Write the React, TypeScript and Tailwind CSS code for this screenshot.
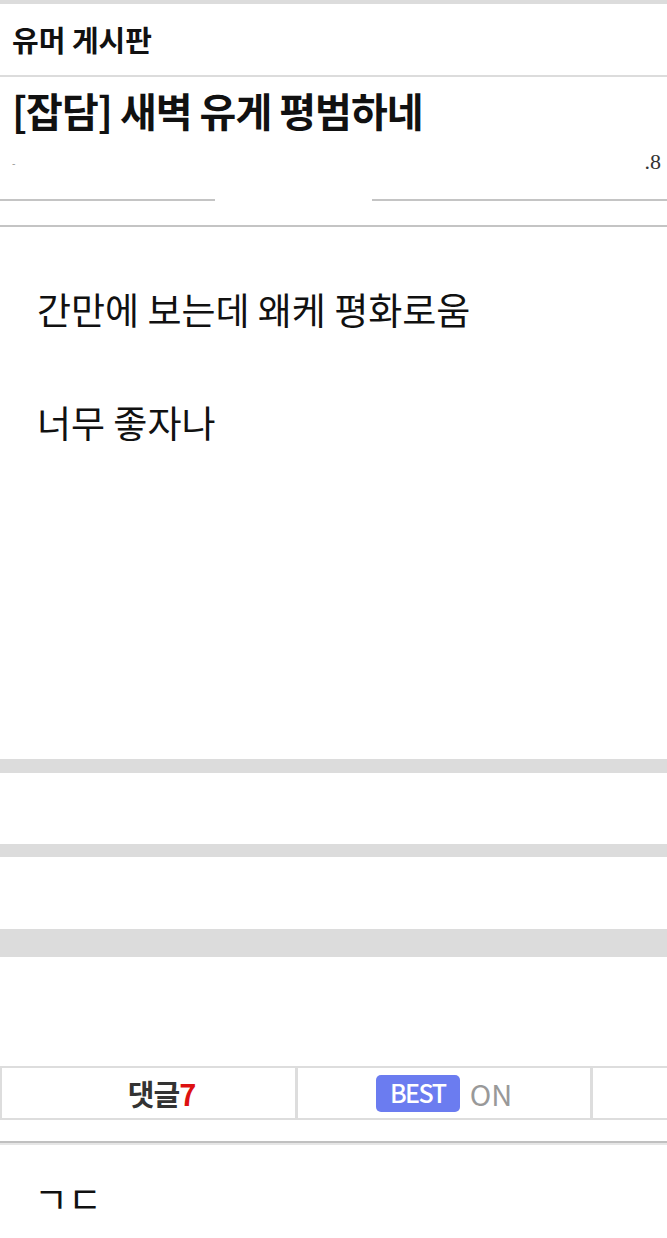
import React from "react";

const KR = '"Noto Sans CJK KR", "Noto Sans", sans-serif';

export default function App() {
  return (
    <div className="w-[667px] bg-white overflow-hidden" style={{ fontFamily: KR }}>
      <div className="h-[4px] bg-[#dcdcdc]" />
      <div className="h-[73px] flex items-center pl-[12px] border-b-2 border-[#dcdcdc]">
        <span className="text-[29px] font-bold text-[#111] leading-none">유머 게시판</span>
      </div>
      <div className="h-[122px] flex flex-col pl-[12px]">
        <div className="pt-[6px] h-[60px] flex items-center">
          <span className="text-[40px] font-bold text-[#111] leading-none tracking-[-1px]">[잡담] 새벽 유게 평범하네</span>
        </div>
        <div className="flex justify-between items-center h-[30px] mt-[10px] pr-[6px]">
          <span className="text-[10px] text-[#888]">-</span>
          <span className="text-[22px] text-[#333] leading-none" style={{ fontFamily: '"Liberation Serif", serif' }}>.8</span>
        </div>
      </div>
      <div className="flex h-[2px]">
        <div className="w-[215px] bg-[#c4c4c4]" />
        <div className="w-[157px] bg-white" />
        <div className="flex-1 bg-[#c4c4c4]" />
      </div>
      <div className="h-[24px]" />
      <div className="h-[2px] bg-[#c4c4c4]" />
      <div className="h-[532px] pl-[37px] pt-[58px] flex flex-col gap-[65px] text-[37px] leading-[48px] text-[#111]">
        <p>간만에 보는데 왜케 평화로움</p>
        <p>너무 좋자나</p>
      </div>
      <div className="h-[14px] bg-[#dcdcdc]" />
      <div className="h-[71px]" />
      <div className="h-[13px] bg-[#dcdcdc]" />
      <div className="h-[72px]" />
      <div className="h-[28px] bg-[#dcdcdc]" />
      <div className="h-[109px]" />
      <div className="flex h-[54px] w-[885px] border-y-2 border-[#dddddd]">
        <div className="w-[295px] shrink-0 border-l-2 border-[#dddddd] flex items-center justify-center pl-[26px]">
          <span className="text-[29px] font-bold text-[#333] leading-none tracking-[-1px]">
            댓글<span className="text-[#dd1111]">7</span>
          </span>
        </div>
        <div className="w-[295px] shrink-0 border-l-[3px] border-[#dddddd] flex items-center justify-center gap-[10px]">
          <span className="w-[84px] h-[37px] rounded-[5px] bg-[#6b7cf0] text-white text-[25px] font-medium flex items-center justify-center tracking-[-1.5px]">BEST</span>
          <span className="text-[29px] text-[#999] leading-none">ON</span>
        </div>
        <div className="w-[295px] shrink-0 border-l-[3px] border-[#dddddd]" />
      </div>
      <div className="h-[21px]" />
      <div className="h-[2px] bg-[#c0c0c0]" />
      <div className="h-[2px] bg-[#e6e6e6]" />
      <div className="h-[91px] pl-[34px] pt-[29px]">
        <p className="text-[37px] leading-[48px] text-[#111]">ㄱㄷ</p>
      </div>
    </div>
  );
}
